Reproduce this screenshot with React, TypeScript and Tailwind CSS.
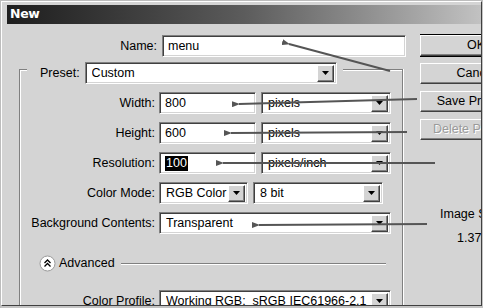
import React from 'react';

const sunken =
  'border border-t-[#808080] border-l-[#808080] border-b-white border-r-white shadow-[inset_1px_1px_0_#404040,inset_-1px_-1px_0_#d4d4d4] bg-white';
const raised =
  'border border-t-white border-l-white border-b-[#404040] border-r-[#404040] shadow-[inset_-1px_-1px_0_#808080] bg-[#d4d4d4]';

const DropButton: React.FC = () => (
  <div className={`${raised} w-[17px] h-[17px] shrink-0 flex items-center justify-center`}>
    <svg width="7" height="4" viewBox="0 0 7 4">
      <path d="M0 0h7L3.5 4z" fill="#000" />
    </svg>
  </div>
);

const Select: React.FC<{ value: string; w: string }> = ({ value, w }) => (
  <div className={`${sunken} ${w} h-[22px] flex items-center pl-[6px] pr-[2px] shrink-0`}>
    <span className="flex-1 truncate whitespace-pre text-black">{value}</span>
    <DropButton />
  </div>
);

const Field: React.FC<{ value: string; w: string; selected?: boolean }> = ({ value, w, selected }) => (
  <div className={`${sunken} ${w} h-[22px] flex items-center pl-[5px] shrink-0`}>
    {selected ? <span className="bg-black text-white px-[1px] leading-[15px]">{value}</span> : <span className="text-black">{value}</span>}
  </div>
);

const Row: React.FC<{ label: string; children: React.ReactNode }> = ({ label, children }) => (
  <div className="flex items-center h-[22px]">
    <div className="w-[136px] text-right pr-[1px] shrink-0 whitespace-nowrap">{label}</div>
    <div className="flex gap-[5px] ml-[3px]">{children}</div>
  </div>
);

const Btn: React.FC<{ label: string; def?: boolean; disabled?: boolean }> = ({ label, def, disabled }) => (
  <div
    className={`w-[112px] h-[21px] flex items-center justify-center shrink-0 whitespace-nowrap ${
      def ? 'outline outline-1 outline-black ' : ''
    }${raised}`}
  >
    <span className={disabled ? 'text-[#9a9a9a] [text-shadow:1px_1px_0_#fff]' : 'text-black'}>{label}</span>
  </div>
);

export default function App() {
  return (
    <div className="w-[483px] h-[308px] overflow-hidden bg-[#c4c4c4] relative font-['Liberation_Sans',Arial,sans-serif] text-[12.5px] text-black">
      <div className="absolute inset-0 border-l border-t border-l-[#bdbdbd] border-t-[#bdbdbd]" />
      <div className="ml-[1px] mt-[1px] pl-[5px] pt-[3px] border-l border-t border-white h-[305px] w-[481px] bg-[#d4d4d4] flex flex-col border-r border-r-[#404040] border-b border-b-[#404040] overflow-hidden">
        {/* title bar */}
        <div className="h-[19px] shrink-0 bg-gradient-to-r from-[#1e1e1e] via-[#5c5c5c] to-[#c2c2c2] flex items-center pl-[3px]">
          <span className="text-white font-bold text-[12.5px] font-['DejaVu_Sans',sans-serif] tracking-[-0.3px]">New</span>
        </div>

        <div className="flex flex-1 min-h-0 overflow-hidden">
          {/* form */}
          <div className="w-[410px] shrink-0 pt-[11px]">
            <div className="flex items-center h-[22px]">
              <div className="w-[151px] text-right pr-[1px]">Name:</div>
              <div className="ml-[4px]">
                <Field value="menu" w="w-[244px]" />
              </div>
            </div>

            {/* preset group */}
            <div className="mt-[12px] ml-[12px] w-[384px] h-[260px] border-t border-l border-r border-t-[#808080] border-l-[#808080] border-r-[#808080] shadow-[inset_1px_1px_0_#fff,1px_0_0_#fff]">
              <div className="-mt-[8px] ml-[7px] w-[316px] bg-[#d4d4d4] flex items-center pl-[13px] h-[22px]">
                <span className="pr-[5px]">Preset:</span>
                <Select value="Custom" w="w-[252px]" />
              </div>

              <div className="mt-[8px] flex flex-col gap-[8px]">
                <Row label="Width:">
                  <Field value="800" w="w-[97px]" />
                  <Select value="pixels" w="w-[130px]" />
                </Row>
                <Row label="Height:">
                  <Field value="600" w="w-[97px]" />
                  <Select value="pixels" w="w-[130px]" />
                </Row>
                <Row label="Resolution:">
                  <Field value="100" w="w-[97px]" selected />
                  <Select value="pixels/inch" w="w-[130px]" />
                </Row>
                <Row label="Color Mode:">
                  <Select value="RGB Color" w="w-[89px]" />
                  <Select value="8 bit" w="w-[130px]" />
                </Row>
                <Row label="Background Contents:">
                  <Select value="Transparent" w="w-[232px]" />
                </Row>
              </div>

              <div className="flex items-center mt-[21px] ml-[19px] h-[16px]">
                <svg width="17" height="17" viewBox="0 0 17 17" className="shrink-0">
                  <circle cx="8.5" cy="8.5" r="7.5" fill="#fff" stroke="#9a9a9a" />
                  <path d="M5.5 8l3-3 3 3M5.5 11.5l3-3 3 3" stroke="#000" strokeWidth="1.3" fill="none" />
                </svg>
                <span className="ml-[3px]">Advanced</span>
                <div className="ml-[6px] w-[265px] h-[1px] bg-[#808080] shadow-[0_1px_0_#fff]" />
              </div>

              <div className="mt-[19px]">
                <Row label="Color Profile:">
                  <Select value="Working RGB:  sRGB IEC61966-2.1" w="w-[232px]" />
                </Row>
              </div>
            </div>
          </div>

          {/* buttons */}
          <div className="flex flex-col pt-[11px] ml-[3px] gap-[7px] min-w-0 overflow-hidden">
            <Btn label="OK" def />
            <Btn label="Cancel" />
            <Btn label="Save Preset..." />
            <Btn label="Delete Preset..." disabled />
            <div className="mt-[58px] pl-[20px] whitespace-nowrap">Image Size:</div>
            <div className="-mt-[2px] pl-[37px] whitespace-nowrap">1.37M</div>
          </div>
        </div>
      </div>

      {/* annotation arrows */}
      <svg className="absolute inset-0 pointer-events-none" width="483" height="308" viewBox="0 0 483 308">
        <defs>
          <marker id="ah" markerWidth="8" markerHeight="6" refX="1" refY="3" orient="auto" markerUnits="userSpaceOnUse">
            <path d="M8 0L0 3L8 6z" fill="#555" />
          </marker>
        </defs>
        <g stroke="#555" strokeWidth="2" fill="none">
          <line x1="390" y1="71" x2="289" y2="44" markerEnd="url(#ah)" />
          <line x1="417" y1="99" x2="239" y2="104" markerEnd="url(#ah)" />
          <line x1="407" y1="132" x2="231" y2="133" markerEnd="url(#ah)" />
          <line x1="435" y1="163" x2="223" y2="163" markerEnd="url(#ah)" />
          <line x1="427" y1="224" x2="259" y2="225" markerEnd="url(#ah)" />
        </g>
      </svg>
    </div>
  );
}
